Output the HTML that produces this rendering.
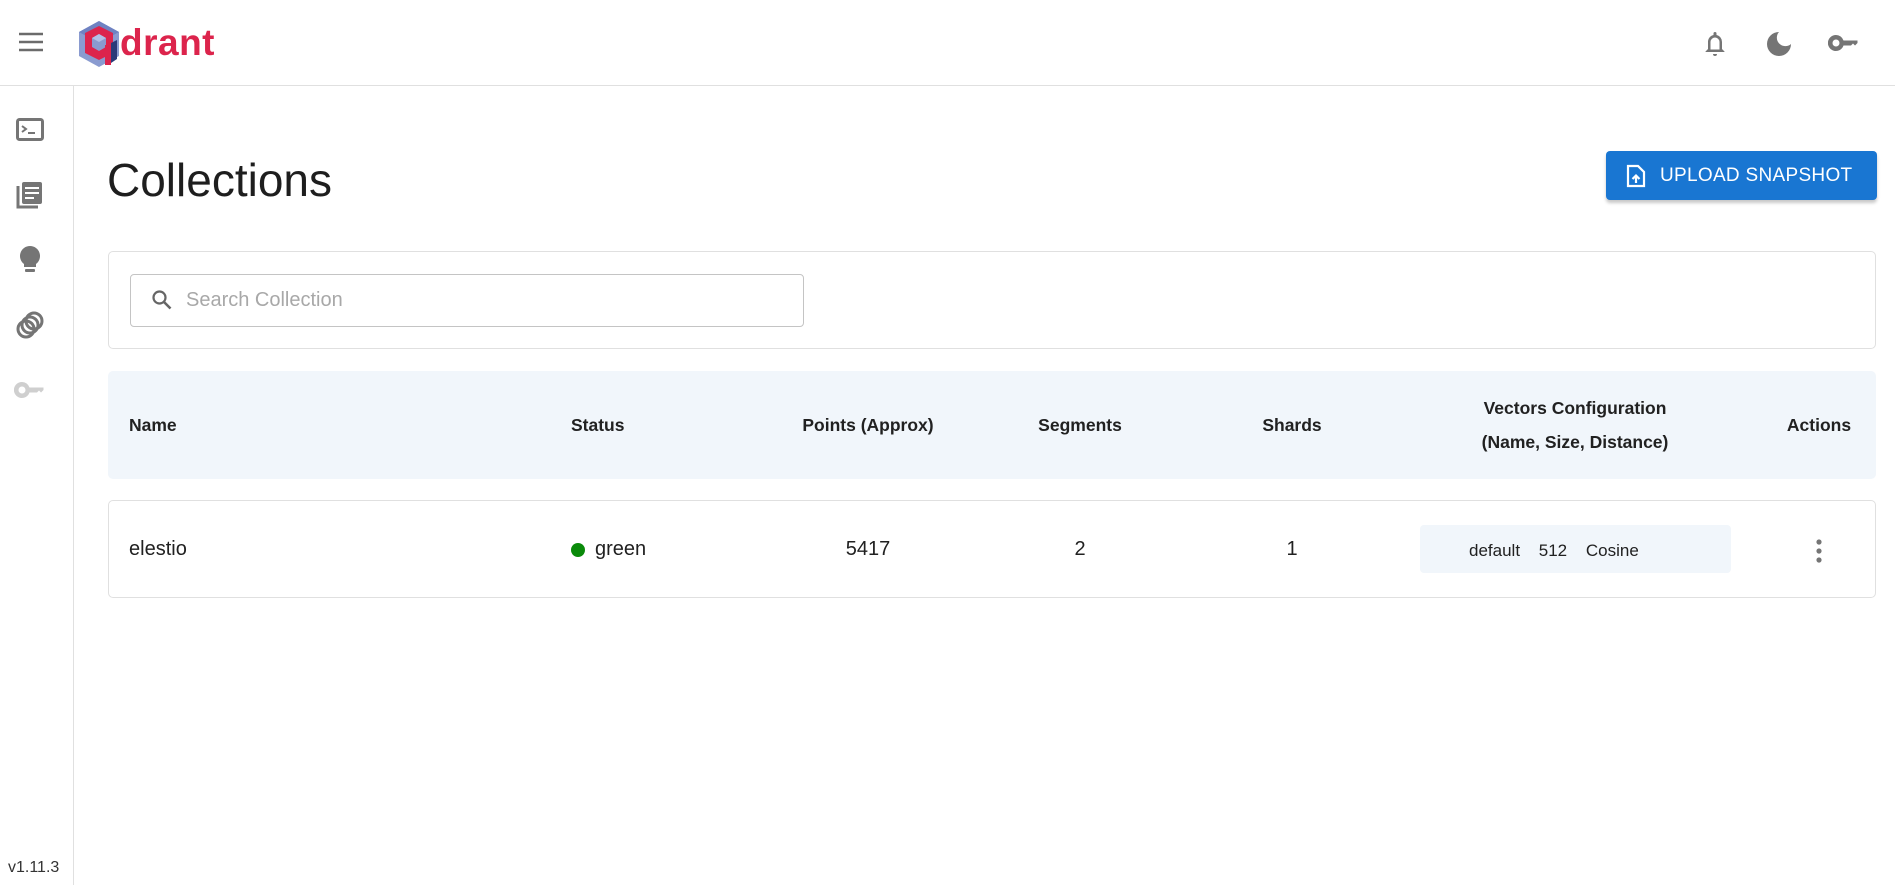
<!DOCTYPE html>
<html><head><meta charset="utf-8"><style>
*{box-sizing:border-box;margin:0;padding:0}
body{width:1895px;height:885px;background:#fff;font-family:"Liberation Sans",Arial,sans-serif;color:#212121;position:relative;overflow:hidden}
.abs{position:absolute}
.hdr{left:0;top:0;width:1895px;height:86px;border-bottom:1px solid #e0e0e0}
.side{left:0;top:86px;width:74px;height:799px;border-right:1px solid #e0e0e0}
.card{border:1px solid #e0e0e0;border-radius:5px;background:#fff}
.th{font-weight:bold;font-size:17.5px;color:#212121}
.td{font-size:20px}
.c{transform:translateX(-50%);text-align:center;white-space:nowrap}
</style></head><body>
<div class="abs hdr"></div>
<svg class="abs" style="left:18px;top:31px" width="26" height="22" viewBox="0 0 26 22"><path d="M1 3h24M1 11h24M1 19h24" stroke="#6b6b6b" stroke-width="2.6"/></svg>
<svg class="abs" style="left:79px;top:21px" width="42" height="46" viewBox="0 0 42 46">
<polygon points="20,0 40,11 40,35 20,46 0,35 0,11" fill="#8a9bd0"/>
<polygon points="20,0 40,11 20,22 0,11" fill="#6f82c2"/>
<path d="M6 12 L20 5 L34 12 V32 L20 39 L6 32Z" fill="#dc244c"/>
<polygon points="20,13 27,17 27,26 20,30 13,26 13,17" fill="#8a9bd0"/>
<polygon points="20,13 27,17 20,21 13,17" fill="#b3bfe6"/>
<rect x="26" y="24" width="6" height="20" fill="#dc244c"/>
<polygon points="32,22 38,19 38,38 32,42" fill="#2b3a78"/>
</svg>
<div class="abs" style="left:120px;top:22px;font-size:37px;font-weight:bold;color:#dc244c;letter-spacing:0.5px">drant</div>
<svg class="abs" style="left:1703px;top:29px" width="24" height="28" viewBox="0 0 24 28"><path d="M12 3a1.5 1.5 0 0 1 1.5 1.5V6a7 7 0 0 1 5.5 7v7l2.5 2.5V23H2.5v-.5L5 20v-7a7 7 0 0 1 5.5-7V4.5A1.5 1.5 0 0 1 12 3zM7.5 20.5h9V13a4.5 4.5 0 0 0-9 0z M10 25h4a2 2 0 0 1-4 0z" fill="#757575"/></svg>
<svg class="abs" style="left:1766px;top:31px" width="26" height="26" viewBox="0 0 26 26"><path d="M13 1a12 12 0 1 0 12 12A8.5 8.5 0 0 1 13 1z" fill="#757575"/></svg>
<svg class="abs" style="left:1828px;top:33px" width="32" height="20" viewBox="0 0 32 20"><path d="M8 2a8 8 0 1 0 7.5 10.5H23l2-2 2 2 2.5-2.5V7.5H15.5A8 8 0 0 0 8 2zm0 4.5a3.5 3.5 0 1 1 0 7 3.5 3.5 0 0 1 0-7z" fill="#757575"/></svg>

<div class="abs side"></div>
<svg class="abs" style="left:16px;top:118px" width="28" height="24" viewBox="0 0 28 24"><rect x="1.5" y="1.5" width="25" height="20" rx="2" fill="none" stroke="#757575" stroke-width="3"/><path d="M6 8l4 3-4 3" fill="none" stroke="#757575" stroke-width="2"/><path d="M12 15h7" stroke="#757575" stroke-width="2"/></svg>
<svg class="abs" style="left:16px;top:180px" width="28" height="30" viewBox="0 0 28 30"><path d="M2 6v21h20" fill="none" stroke="#757575" stroke-width="3"/><rect x="6" y="2" width="20" height="22" rx="2" fill="#757575"/><path d="M9 8h14M9 13h14M9 18h9" stroke="#fff" stroke-width="2"/></svg>
<svg class="abs" style="left:18px;top:245px" width="24" height="30" viewBox="0 0 24 30"><path d="M12 1a10 10 0 0 0-6 18v3h12v-3A10 10 0 0 0 12 1z" fill="#757575"/><rect x="7" y="24" width="10" height="3" rx="1" fill="#757575"/></svg>
<svg class="abs" style="left:15px;top:310px" width="30" height="30" viewBox="0 0 30 30" fill="none" stroke="#757575" stroke-width="3"><circle cx="11" cy="19" r="8"/><circle cx="15" cy="15" r="8"/><circle cx="19" cy="11" r="8"/></svg>
<svg class="abs" style="left:14px;top:380px" width="32" height="20" viewBox="0 0 32 20"><path d="M8 2a8 8 0 1 0 7.5 10.5H23l2-2 2 2 2.5-2.5V7.5H15.5A8 8 0 0 0 8 2zm0 4.5a3.5 3.5 0 1 1 0 7 3.5 3.5 0 0 1 0-7z" fill="#cfcfcf"/></svg>
<div class="abs" style="left:8px;top:859px;font-size:16px;color:#333">v1.11.3</div>

<div class="abs" style="left:107px;top:153px;font-size:46px;color:#1e1e1e">Collections</div>
<div class="abs" style="left:1606px;top:151px;width:271px;height:49px;background:#1976d2;border-radius:4px;box-shadow:0 3px 3px rgba(0,0,0,.22);color:#fff;font-size:19px;letter-spacing:.3px">
<svg class="abs" style="left:20px;top:13px" width="20" height="24" viewBox="0 0 20 24"><path d="M2 2h10l6 6v14H2z" fill="none" stroke="#fff" stroke-width="2.2"/><path d="M10 19v-7M6.5 15l3.5-3.5 3.5 3.5" stroke="#fff" stroke-width="2.2" fill="none"/></svg>
<span class="abs" style="left:54px;top:14px">UPLOAD SNAPSHOT</span></div>

<div class="abs card" style="left:108px;top:251px;width:1768px;height:98px"></div>
<div class="abs" style="left:130px;top:274px;width:674px;height:53px;border:1.5px solid #c4c4c4;border-radius:4px">
<svg class="abs" style="left:20px;top:14px" width="22" height="22" viewBox="0 0 22 22"><circle cx="8.5" cy="8.5" r="6" fill="none" stroke="#666" stroke-width="2.2"/><path d="M13 13l6.5 6.5" stroke="#666" stroke-width="2.6"/></svg>
<span class="abs" style="left:55px;top:14px;font-size:20px;color:#a8a8a8">Search Collection</span></div>

<div class="abs" style="left:108px;top:371px;width:1768px;height:108px;background:#f1f6fb;border-radius:5px"></div>
<div class="abs th" style="left:129px;top:415px">Name</div>
<div class="abs th" style="left:571px;top:415px">Status</div>
<div class="abs th c" style="left:868px;top:415px">Points (Approx)</div>
<div class="abs th c" style="left:1080px;top:415px">Segments</div>
<div class="abs th c" style="left:1292px;top:415px">Shards</div>
<div class="abs th c" style="left:1575px;top:391px;line-height:34px">Vectors Configuration<br>(Name, Size, Distance)</div>
<div class="abs th c" style="left:1819px;top:415px">Actions</div>

<div class="abs card" style="left:108px;top:500px;width:1768px;height:98px"></div>
<div class="abs td" style="left:129px;top:538px">elestio</div>
<div class="abs" style="left:571px;top:543px;width:14px;height:14px;border-radius:50%;background:#0a8a0a"></div>
<div class="abs td" style="left:595px;top:538px">green</div>
<div class="abs td c" style="left:868px;top:538px">5417</div>
<div class="abs td c" style="left:1080px;top:538px">2</div>
<div class="abs td c" style="left:1292px;top:538px">1</div>
<div class="abs" style="left:1420px;top:525px;width:311px;height:48px;background:#f1f6fb;border-radius:4px"></div>
<div class="abs" style="left:1469px;top:541px;font-size:17px;word-spacing:14px">default 512 Cosine</div>
<svg class="abs" style="left:1814px;top:538px" width="10" height="26" viewBox="0 0 10 26"><circle cx="5" cy="4" r="2.6" fill="#757575"/><circle cx="5" cy="13" r="2.6" fill="#757575"/><circle cx="5" cy="22" r="2.6" fill="#757575"/></svg>
</body></html>
